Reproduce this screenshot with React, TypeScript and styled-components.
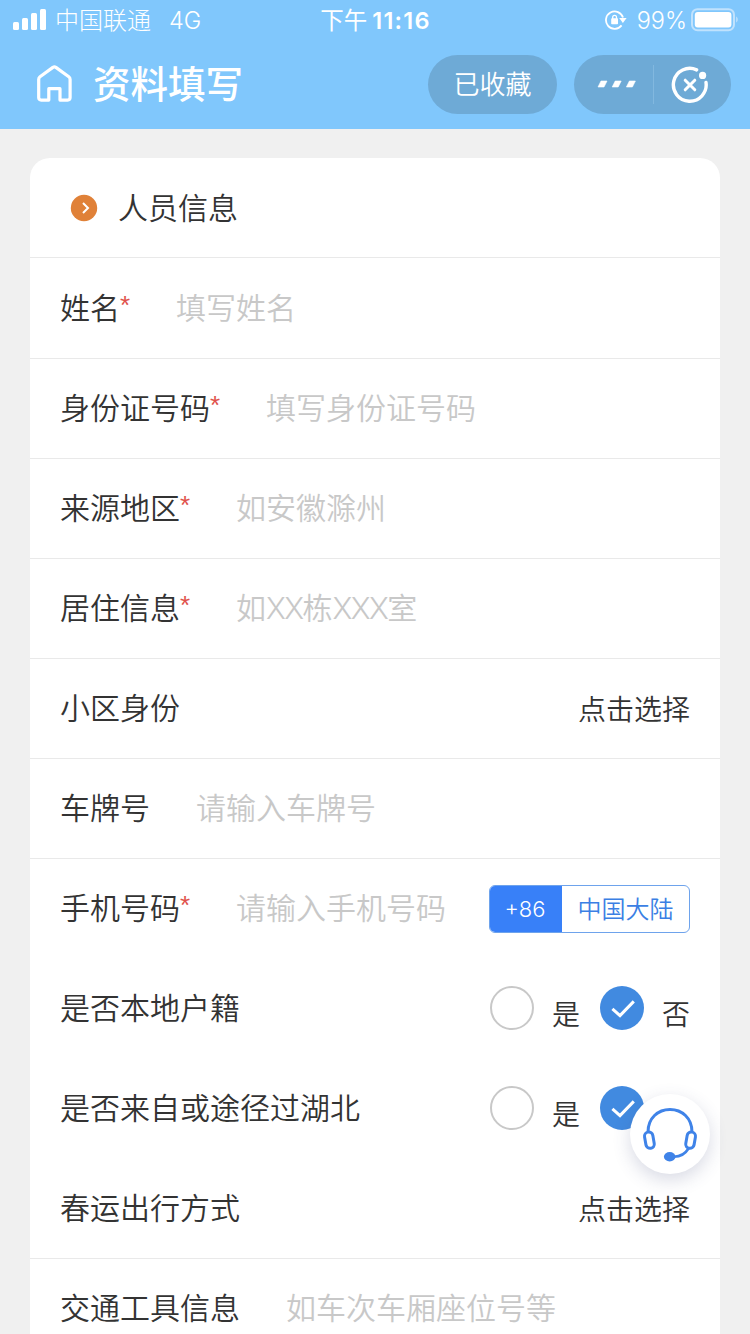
import React from 'react';
import styled, { createGlobalStyle } from 'styled-components';

const GlobalStyle = createGlobalStyle`
  * { box-sizing: border-box; }
  body {
    margin: 0;
    background: #f0f0f0;
    font-family: Inter, "Noto Sans CJK SC", sans-serif;
    color: #333;
  }
`;

const Screen = styled.div`
  position: relative;
  display: flex;
  flex-direction: column;
  width: 750px;
  height: 1334px;
  overflow: hidden;
`;

const Header = styled.header`
  flex: none;
  height: 129px;
  background: #80c7fc;
  color: #fff;
`;

const StatusBar = styled.div`
  display: grid;
  grid-template-columns: 1fr auto 1fr;
  align-items: center;
  height: 40px;
  padding: 0 12px 0 13px;
  line-height: 38px;
  white-space: nowrap;
`;

const Carrier = styled.div`
  display: flex;
  align-items: center;
  padding-top: 2px;
  font-size: 24px;
  font-weight: 300;
  svg { margin: 0 8px 2px 0; }
`;

const Network = styled.span`
  margin-left: 18px;
  font-size: 23.5px;
`;

const Clock = styled.div`
  display: flex;
  gap: 5px;
  padding-top: 2px;
  font-size: 23.5px;
  font-weight: 400;
  b {
    font-weight: 600;
    font-size: 23.5px;
    letter-spacing: 1.2px;
  }
`;

const Power = styled.div`
  display: flex;
  justify-content: flex-end;
  align-items: center;
  font-size: 23.5px;
  font-weight: 300;
  span { margin: 0 4px 0 10px; padding-top: 2px; }
`;

const NavBar = styled.div`
  display: flex;
  align-items: center;
  height: 88px;
  padding: 0 19px 0 36px;
`;

const Title = styled.h1`
  flex: 1;
  margin: 2px 0 0 20px;
  font-size: 37.5px;
  line-height: 56px;
  font-weight: 500;
`;

const Pill = styled.div<{ $width: number }>`
  display: flex;
  align-items: center;
  justify-content: center;
  width: ${(p) => p.$width}px;
  height: 59px;
  margin-left: 17px;
  border-radius: 30px;
  background: #6eaad6;
  font-size: 26px;
  line-height: 40px;
  font-weight: 350;
`;

const PillLabel = styled.span`
  margin-top: 2px;
`;

const PillHalf = styled.div<{ $divided?: boolean }>`
  flex: 1;
  display: flex;
  align-items: center;
  justify-content: center;
  height: 39px;
  padding: ${(p) => (p.$divided ? '0 0 0 7px' : '2px 5px 0 0')};
  border-right: ${(p) => (p.$divided ? '1px solid #82b8df' : '0')};
`;

const Card = styled.main`
  flex: none;
  margin: 29px 30px 0;
  border-radius: 20px 20px 0 0;
  background: #fff;
`;

const CardTitle = styled.h2`
  display: flex;
  align-items: center;
  gap: 20px;
  height: 100px;
  margin: 0;
  padding: 0 40px;
  border-bottom: 1px solid #e9e9e9;
  font-size: 30px;
  line-height: 44px;
  font-weight: 350;
`;

const Row = styled.div<{ $plain?: boolean; $tall?: boolean }>`
  display: flex;
  align-items: center;
  height: ${(p) => (p.$tall ? 101 : 100)}px;
  padding: 0 30px 1px;
  border-bottom: 1px solid ${(p) => (p.$plain ? 'transparent' : '#e9e9e9')};
  white-space: nowrap;
`;

const Label = styled.label`
  display: flex;
  font-size: 30px;
  line-height: 44px;
  font-weight: 350;
`;

const Required = styled.span`
  width: 10px;
  color: #e0524b;
  font-family: "Liberation Sans", sans-serif;
  font-size: 26px;
  line-height: 38px;
`;

const Hint = styled.span`
  margin-left: 46px;
  color: #c8c8c8;
  font-size: 30px;
  line-height: 44px;
  font-weight: 350;
`;

const Latin = styled.span`
  font-weight: 300;
  letter-spacing: -1.6px;
`;

const Picker = styled.span`
  margin: 3px 0 0 auto;
  font-size: 28px;
  line-height: 42px;
  font-weight: 350;
`;

const Region = styled.div`
  display: flex;
  width: 201px;
  height: 48px;
  margin: 2px 0 0 auto;
  border: 1px solid #6ea3ec;
  border-radius: 6px;
  overflow: hidden;
  font-size: 24px;
  line-height: 47px;
  text-align: center;
`;

const DialCode = styled.span`
  width: 72px;
  padding-right: 2px;
  background: #3880f8;
  color: #fff;
  font-size: 22px;
  font-weight: 350;
`;

const Country = styled.span`
  flex: 1;
  color: #3b7fe4;
  font-weight: 350;
`;

const Options = styled.div`
  display: flex;
  align-items: center;
  margin-left: auto;
`;

const Radio = styled.span<{ $checked?: boolean }>`
  display: flex;
  align-items: center;
  justify-content: center;
  width: 44px;
  height: 44px;
  border-radius: 50%;
  border: ${(p) => (p.$checked ? '0' : '2px solid #c8c8c8')};
  background: ${(p) => (p.$checked ? '#418ae0' : '#fff')};
`;

const OptionText = styled.span<{ $last?: boolean }>`
  margin: 14px ${(p) => (p.$last ? 0 : 20)}px 0 18px;
  font-size: 28px;
  line-height: 40px;
  font-weight: 350;
`;

const Support = styled.button`
  position: absolute;
  left: 630px;
  top: 1094px;
  width: 80px;
  height: 80px;
  padding: 0;
  border: 0;
  border-radius: 50%;
  background: #fff;
  box-shadow: 0 6px 18px rgba(60, 70, 120, 0.2);
`;

const SignalIcon = () => (
  <svg width="34" height="22" viewBox="0 0 34 22" fill="#fff">
    <rect x="0" y="13" width="6" height="8" rx="1.5" />
    <rect x="9" y="9" width="6" height="12" rx="1.5" />
    <rect x="18" y="4" width="6" height="17" rx="1.5" />
    <rect x="27" y="0" width="6" height="21" rx="1.5" />
  </svg>
);

const RotationLockIcon = () => (
  <svg width="22" height="20" viewBox="0 0 22 20" fill="none" stroke="#fff">
    <path d="M16.6 15.4A8.7 8.7 0 1 1 18 7.6" strokeWidth="1.8" />
    <path d="M14.2 8h7.4l-3.7 5z" fill="#fff" stroke="none" />
    <rect x="6.2" y="8.3" width="6.8" height="6" rx=".8" fill="#fff" stroke="none" />
    <path d="M7.7 9V7.2a1.9 1.9 0 0 1 3.8 0V9" strokeWidth="1.3" />
  </svg>
);

const BatteryIcon = () => (
  <svg width="47" height="24" viewBox="0 0 47 24">
    <rect x="1" y="1.2" width="42" height="21" rx="5.5" fill="none" stroke="#c0e2fd" strokeWidth="2" />
    <rect x="3.8" y="4" width="36.6" height="15.4" rx="3" fill="#fff" />
    <path d="M45.2 8.6c2 1 2 5 0 6z" fill="#c0e2fd" />
  </svg>
);

const HomeIcon = () => (
  <svg width="37" height="38" viewBox="0 0 37 38" fill="none" stroke="#fff" strokeWidth="3.2" strokeLinejoin="round">
    <path d="M2.7 14.4Q2.7 12.8 4 11.8L16.9 2.4Q18.4 1.4 19.9 2.4L32.8 11.8Q34.1 12.8 34.1 14.4V32.6Q34.1 35.1 31.6 35.1H24V23.7H12.8V35.1H5.2Q2.7 35.1 2.7 32.6Z" />
  </svg>
);

const MoreIcon = () => (
  <svg width="40" height="8" viewBox="0 0 40 8" fill="#fff" stroke="#fff" strokeWidth="0.6" strokeLinejoin="round">
    <path d="M4 1h6l-3 6H1zM18.2 1h6l-3 6h-6zM32.4 1h6l-3 6h-6z" />
  </svg>
);

const CloseIcon = () => (
  <svg width="38" height="38" viewBox="0 0 38 38" fill="none" stroke="#fff" strokeLinecap="round">
    <path d="M25.6 3.9A16.4 16.4 0 1 0 35 16.4" strokeWidth="3.4" />
    <path d="M14.2 14.2l9.6 9.6M23.8 14.2l-9.6 9.6" strokeWidth="3" />
    <circle cx="31.6" cy="9.4" r="3.6" fill="#fff" stroke="none" />
  </svg>
);

const ArrowBadge = () => (
  <svg width="28" height="28" viewBox="0 0 28 28">
    <circle cx="14" cy="14" r="13.2" fill="#e08138" />
    <path d="M13 9l5 5-5 5" fill="none" stroke="#fff" strokeWidth="2" />
  </svg>
);

const CheckIcon = () => (
  <svg width="44" height="44" viewBox="0 0 44 44" fill="none" stroke="#fff" strokeWidth="3">
    <path d="M12.4 22.8l7.6 6.8L33.8 15.4" />
  </svg>
);

const HeadsetIcon = () => (
  <svg width="80" height="80" viewBox="0 0 80 80" fill="none" stroke="#3f83e8" strokeWidth="3">
    <path d="M18 38C18 24 28 15.5 40 15.5S62 24 62 38" />
    <rect x="15.2" y="38" width="8.4" height="16.4" rx="4.2" transform="rotate(-10 19.4 46.2)" />
    <rect x="56.4" y="38" width="8.4" height="16.4" rx="4.2" transform="rotate(10 60.6 46.2)" />
    <path d="M58.5 54.5C55.5 59.5 51 62.6 44 62.8" strokeWidth="2.6" />
    <ellipse cx="39.7" cy="62.8" rx="5.8" ry="4.7" fill="#3f83e8" stroke="none" />
  </svg>
);

type FieldProps = {
  label: string;
  hint?: React.ReactNode;
  required?: boolean;
  plain?: boolean;
  tall?: boolean;
  children?: React.ReactNode;
};

const Field = ({ label, hint, required, plain, tall, children }: FieldProps) => (
  <Row $plain={plain} $tall={tall}>
    <Label>
      {label}
      {required && <Required>*</Required>}
    </Label>
    {hint && <Hint>{hint}</Hint>}
    {children}
  </Row>
);

const YesNo = () => (
  <Options>
    <Radio />
    <OptionText>是</OptionText>
    <Radio $checked>
      <CheckIcon />
    </Radio>
    <OptionText $last>否</OptionText>
  </Options>
);

export default function App() {
  return (
    <Screen>
      <GlobalStyle />
      <Header>
        <StatusBar>
          <Carrier>
            <SignalIcon />
            中国联通
            <Network>4G</Network>
          </Carrier>
          <Clock>
            下午<b>11:16</b>
          </Clock>
          <Power>
            <RotationLockIcon />
            <span>99%</span>
            <BatteryIcon />
          </Power>
        </StatusBar>
        <NavBar>
          <HomeIcon />
          <Title>资料填写</Title>
          <Pill $width={129}>
            <PillLabel>已收藏</PillLabel>
          </Pill>
          <Pill $width={157}>
            <PillHalf $divided>
              <MoreIcon />
            </PillHalf>
            <PillHalf>
              <CloseIcon />
            </PillHalf>
          </Pill>
        </NavBar>
      </Header>
      <Card>
        <CardTitle>
          <ArrowBadge />
          人员信息
        </CardTitle>
        <Field label="姓名" hint="填写姓名" required tall />
        <Field label="身份证号码" hint="填写身份证号码" required />
        <Field label="来源地区" hint="如安徽滁州" required />
        <Field
          label="居住信息"
          hint={<>如<Latin>XX</Latin>栋<Latin>XXX</Latin>室</>}
          required
        />
        <Field label="小区身份">
          <Picker>点击选择</Picker>
        </Field>
        <Field label="车牌号" hint="请输入车牌号" />
        <Field label="手机号码" hint="请输入手机号码" required plain>
          <Region>
            <DialCode>+86</DialCode>
            <Country>中国大陆</Country>
          </Region>
        </Field>
        <Field label="是否本地户籍" plain>
          <YesNo />
        </Field>
        <Field label="是否来自或途径过湖北" plain>
          <YesNo />
        </Field>
        <Field label="春运出行方式">
          <Picker>点击选择</Picker>
        </Field>
        <Field label="交通工具信息" hint="如车次车厢座位号等" />
      </Card>
      <Support aria-label="客服">
        <HeadsetIcon />
      </Support>
    </Screen>
  );
}
